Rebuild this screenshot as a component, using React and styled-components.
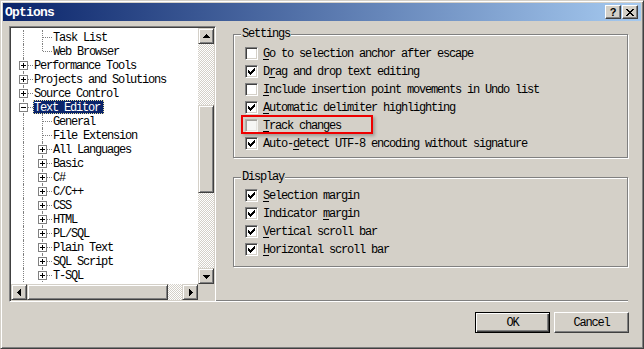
import styled, { createGlobalStyle, css } from "styled-components";

const GlobalStyle = createGlobalStyle`
  html, body {
    margin: 0;
    padding: 0;
  }
  body {
    background: #d4d0c8;
    font-family: "Liberation Mono", "DejaVu Sans Mono", monospace;
    font-size: 12px;
    letter-spacing: -1.2px;
    color: #000;
  }
  * {
    box-sizing: border-box;
  }
`;

const raised = css`
  background: #d4d0c8;
  border: 1px solid;
  border-color: #d4d0c8 #404040 #404040 #d4d0c8;
  box-shadow: inset 1px 1px 0 #fff, inset -1px -1px 0 #808080;
`;

const checker = css`
  background-color: #fff;
  background-image: conic-gradient(#d4d0c8 25%, #fff 0 50%, #d4d0c8 0 75%, #fff 0);
  background-size: 2px 2px;
`;

const settings = [
  { pre: "", key: "G", post: "o to selection anchor after escape", checked: false },
  { pre: "D", key: "r", post: "ag and drop text editing", checked: true },
  { pre: "", key: "I", post: "nclude insertion point movements in Undo list", checked: false },
  { pre: "", key: "A", post: "utomatic delimiter highlighting", checked: true },
  { pre: "", key: "T", post: "rack changes", checked: false, faded: true },
  { pre: "Auto-", key: "d", post: "etect UTF-8 encoding without signature", checked: true },
];

const display = [
  { pre: "", key: "S", post: "election margin", checked: true },
  { pre: "Indicator ", key: "m", post: "argin", checked: true },
  { pre: "", key: "V", post: "ertical scroll bar", checked: true },
  { pre: "", key: "H", post: "orizontal scroll bar", checked: true },
];

const langs = [
  "All Languages", "Basic", "C#", "C/C++", "CSS", "HTML",
  "PL/SQL", "Plain Text", "SQL Script", "T-SQL",
];

const treeRows = [
  { label: "Task List", level: 1, branch: "tee" },
  { label: "Web Browser", level: 1, branch: "elbow" },
  { label: "Performance Tools", level: 0, branch: "tee", expander: "plus" },
  { label: "Projects and Solutions", level: 0, branch: "tee", expander: "plus" },
  { label: "Source Control", level: 0, branch: "tee", expander: "plus" },
  { label: "Text Editor", level: 0, branch: "tee", expander: "minus", selected: true },
  { label: "General", level: 1, branch: "tee" },
  { label: "File Extension", level: 1, branch: "tee" },
  ...langs.map((label) => ({ label, level: 1, branch: "tee", expander: "plus" })),
];

const vScroll = { offset: 61, size: 88 };
const hScroll = { offset: 0, size: 141 };

const Check = () => (
  <svg width="7" height="7" viewBox="0 0 7 7" shapeRendering="crispEdges">
    <path
      fill="#000"
      d="M6 0h1v1h-1z M5 1h2v1h-2z M0 2h1v1h-1z M4 2h3v1h-3z M0 3h2v1h-2z M3 3h3v1h-3z M0 4h5v1h-5z M1 5h3v1h-3z M2 6h1v1h-1z"
    />
  </svg>
);

const CloseGlyph = () => (
  <svg width="8" height="7" viewBox="0 0 8 7" shapeRendering="crispEdges">
    <path
      fill="#000"
      d="M0 0h2v1h-2z M6 0h2v1h-2z M1 1h2v1h-2z M5 1h2v1h-2z M2 2h4v1h-4z M3 3h2v1h-2z M2 4h4v1h-4z M1 5h2v1h-2z M5 5h2v1h-2z M0 6h2v1h-2z M6 6h2v1h-2z"
    />
  </svg>
);

const Arrow = ({ dir }) => {
  const rot = { up: 0, right: 90, down: 180, left: 270 }[dir];
  return (
    <svg
      width="7"
      height="7"
      viewBox="0 0 7 7"
      shapeRendering="crispEdges"
      style={{ transform: `rotate(${rot}deg)` }}
    >
      <path fill="#000" d="M3 1h1v1h-1z M2 2h3v1h-3z M1 3h5v1h-5z M0 4h7v1h-7z" />
    </svg>
  );
};

const Option = ({ item }) => (
  <CheckRow>
    <CheckBox $faded={item.faded}>{item.checked && <Check />}</CheckBox>
    <CheckText>
      {item.pre}
      <Mnemonic>{item.key}</Mnemonic>
      {item.post}
    </CheckText>
  </CheckRow>
);

const TreeRow = ({ row }) => (
  <Row>
    {Array.from({ length: row.level }).map((_, i) => (
      <Guide key={i} $v="full" />
    ))}
    <Guide $v={row.branch === "elbow" ? "half" : "full"} $h>
      {row.expander && <Expander $plus={row.expander === "plus"} />}
    </Guide>
    <NodeLabel $selected={row.selected}>{row.label}</NodeLabel>
  </Row>
);

const App = () => (
  <>
    <GlobalStyle />
    <Window>
      <TitleBar>
        <Title>Options</Title>
        <CaptionButton $gap={1}>?</CaptionButton>
        <CaptionButton>
          <CloseGlyph />
        </CaptionButton>
      </TitleBar>

      <Main>
        <TreeFrame>
          <TreeView>
            {treeRows.map((row) => (
              <TreeRow key={row.label} row={row} />
            ))}
          </TreeView>
          <VScroll>
            <ScrollButton>
              <Arrow dir="up" />
            </ScrollButton>
            <Thumb $vertical $offset={vScroll.offset} $size={vScroll.size} />
            <Track />
            <ScrollButton>
              <Arrow dir="down" />
            </ScrollButton>
          </VScroll>
          <HScroll>
            <ScrollButton>
              <Arrow dir="left" />
            </ScrollButton>
            <Thumb $offset={hScroll.offset} $size={hScroll.size} />
            <Track />
            <ScrollButton>
              <Arrow dir="right" />
            </ScrollButton>
          </HScroll>
          <Corner />
        </TreeFrame>

        <RightColumn>
          <Groups>
            <Group $pad="9px 0 5px 11px">
              <GroupLabel>Settings</GroupLabel>
              {settings.map((item) => (
                <Option key={item.post} item={item} />
              ))}
              <Highlight />
            </Group>
            <Group $pad="8px 0 8px 11px">
              <GroupLabel>Display</GroupLabel>
              {display.map((item) => (
                <Option key={item.post} item={item} />
              ))}
            </Group>
          </Groups>
          <Separator />
        </RightColumn>
      </Main>

      <Footer>
        <Button $default>OK</Button>
        <Button>Cancel</Button>
      </Footer>
    </Window>
  </>
);

export default App;

const Window = styled.div`
  width: 644px;
  height: 349px;
  background: #d4d0c8;
  border: 1px solid;
  border-color: #d4d0c8 #404040 #404040 #d4d0c8;
  box-shadow: inset 1px 1px 0 #fff, inset -1px -1px 0 #808080;
  padding: 2px;
  display: flex;
  flex-direction: column;
`;

const TitleBar = styled.div`
  height: 18px;
  flex: none;
  display: flex;
  align-items: center;
  padding: 0 3px 0 2px;
  background: linear-gradient(to right, #0a246a, #a6caf0);
`;

const Title = styled.span`
  flex: 1;
  color: #fff;
  font-weight: bold;
  font-size: 13px;
  letter-spacing: -0.8px;
`;

const CaptionButton = styled.button`
  width: 16px;
  height: 14px;
  padding: 0;
  margin: 0 ${(p) => p.$gap || 0}px 0 0;
  display: flex;
  align-items: center;
  justify-content: center;
  background: #d4d0c8;
  border: 1px solid;
  border-color: #fff #404040 #404040 #fff;
  box-shadow: inset -1px -1px 0 #808080;
  font: bold 11px "Liberation Sans", Arial, sans-serif;
  letter-spacing: 0;
  color: #000;
`;

const Main = styled.div`
  display: flex;
  padding: 5px 13px 0 6px;
`;

const TreeFrame = styled.div`
  width: 207px;
  height: 276px;
  flex: none;
  border: 1px solid;
  border-color: #808080 #fff #fff #808080;
  padding: 1px;
  background: #fff;
  box-shadow: inset 1px 1px 0 #404040, inset -1px -1px 0 #d4d0c8;
  display: grid;
  grid-template-columns: 1fr 16px;
  grid-template-rows: 1fr 16px;
`;

const TreeView = styled.div`
  overflow: hidden;
  background: #fff;
  padding: 2px 0 0 3px;
`;

const Row = styled.div`
  display: flex;
  height: 14px;
  white-space: nowrap;
`;

const Guide = styled.span`
  position: relative;
  width: 19px;
  flex: none;

  ${(p) =>
    p.$v &&
    css`
      &::before {
        content: "";
        position: absolute;
        left: 9px;
        top: 0;
        bottom: ${p.$v === "half" ? "7px" : "0"};
        border-left: 1px dotted #808080;
      }
    `}

  ${(p) =>
    p.$h &&
    css`
      &::after {
        content: "";
        position: absolute;
        left: 10px;
        right: 0;
        top: 7px;
        border-top: 1px dotted #808080;
      }
    `}
`;

const Expander = styled.span`
  position: absolute;
  left: 5px;
  top: 3px;
  width: 9px;
  height: 9px;
  border: 1px solid #808080;
  background: #fff;
  z-index: 1;

  &::before {
    content: "";
    position: absolute;
    left: 1px;
    top: 3px;
    width: 5px;
    height: 1px;
    background: #000;
  }

  ${(p) =>
    p.$plus &&
    css`
      &::after {
        content: "";
        position: absolute;
        left: 3px;
        top: 1px;
        width: 1px;
        height: 5px;
        background: #000;
      }
    `}
`;

const NodeLabel = styled.span`
  height: 14px;
  line-height: 11px;
  padding: 2px 3px 0 0;
  border: 1px solid transparent;

  ${(p) =>
    p.$selected &&
    css`
      background: #0a246a;
      color: #fff;
      border: 1px dotted #e8e0a0;
    `}
`;

const VScroll = styled.div`
  display: flex;
  flex-direction: column;
  ${checker}
`;

const HScroll = styled.div`
  display: flex;
  ${checker}
`;

const ScrollButton = styled.div`
  width: 16px;
  height: 16px;
  flex: none;
  display: flex;
  align-items: center;
  justify-content: center;
  ${raised}
`;

const Thumb = styled.div`
  flex: none;
  ${raised}
  ${(p) =>
    p.$vertical
      ? css`
          margin-top: ${p.$offset}px;
          height: ${p.$size}px;
        `
      : css`
          margin-left: ${p.$offset}px;
          width: ${p.$size}px;
        `}
`;

const Track = styled.div`
  flex: 1;
`;

const Corner = styled.div`
  background: #d4d0c8;
`;

const RightColumn = styled.div`
  flex: 1;
  display: flex;
  flex-direction: column;
`;

const Groups = styled.div`
  flex: 1;
  padding: 8px 0 0 17px;
`;

const Group = styled.div`
  position: relative;
  border: 1px solid #808080;
  box-shadow: inset 1px 1px 0 #fff, 1px 1px 0 #fff;
  padding: ${(p) => p.$pad};

  & + & {
    margin-top: 19px;
  }
`;

const GroupLabel = styled.span`
  position: absolute;
  left: 7px;
  top: -8px;
  padding: 0 1px;
  line-height: 14px;
  background: #d4d0c8;
`;

const CheckRow = styled.label`
  display: flex;
  align-items: center;
  gap: 5px;
  height: 18px;
  white-space: nowrap;
`;

const CheckText = styled.span`
  padding-top: 1px;
`;

const CheckBox = styled.span`
  width: 13px;
  height: 13px;
  flex: none;
  display: flex;
  padding: 2px;
  background: #fff;
  border: 1px solid;
  border-color: #808080 #fff #fff #808080;
  box-shadow: inset 1px 1px 0 #404040, inset -1px -1px 0 #d4d0c8;

  ${(p) =>
    p.$faded &&
    css`
      background: #f6f6f4;
      border-color: #b4b1aa #f4f3f0 #f4f3f0 #b4b1aa;
      box-shadow: inset 1px 1px 0 #a19e99, inset -1px -1px 0 #e6e4df;
    `}
`;

const Mnemonic = styled.span`
  text-decoration: underline;
  text-underline-offset: 2px;
`;

const Highlight = styled.div`
  position: absolute;
  left: 7px;
  top: 80px;
  width: 132px;
  height: 19px;
  border: 2px solid #ee0000;
  box-shadow: 2px 2px 3px rgba(0, 0, 0, 0.25);
  pointer-events: none;
`;

const Separator = styled.div`
  height: 2px;
  flex: none;
  border-top: 1px solid #808080;
  border-bottom: 1px solid #fff;
`;

const Footer = styled.div`
  display: flex;
  justify-content: flex-end;
  gap: 4px;
  padding: 10px 12px 0 0;
`;

const Button = styled.button`
  width: 75px;
  height: 21px;
  padding: 0;
  font-family: "Liberation Mono", "DejaVu Sans Mono", monospace;
  font-size: 12px;
  letter-spacing: -1.2px;
  color: #000;
  background: #d4d0c8;
  border: 1px solid;
  border-color: #fff #404040 #404040 #fff;
  box-shadow: inset -1px -1px 0 #808080;

  ${(p) =>
    p.$default &&
    css`
      border-color: #000;
      box-shadow: inset 1px 1px 0 #fff, inset -1px -1px 0 #404040,
        inset -2px -2px 0 #808080;
    `}
`;
